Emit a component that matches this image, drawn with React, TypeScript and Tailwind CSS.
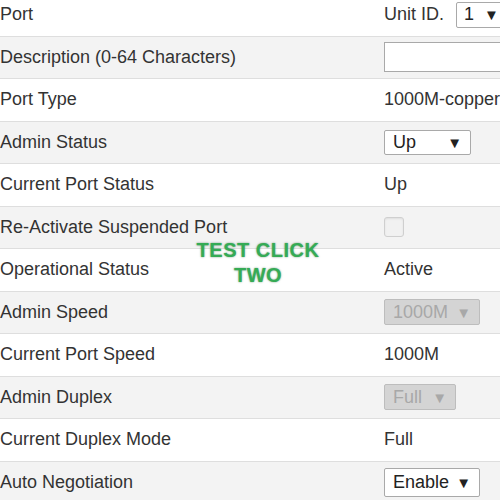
import React from "react"

type Row = {
    label: string
    value: React.ReactNode
}

function Select({ text, width, disabled, height = "h-[26px]" }: { text: string; width: string; disabled?: boolean; height?: string }) {
    return (
        <div
            className={
                "flex items-center justify-between pl-[8px] pr-[8px] border rounded-[2px] " +
                width + " " + height + " " +
                (disabled
                    ? "bg-[#d4d4d4] border-[#bdbdbd] text-[#a8a8a8]"
                    : "bg-white border-[#a9a9a9] text-[#222]")
            }
        >
            <span>{text}</span>
            <span className="text-[15px] leading-none">▼</span>
        </div>
    )
}

export default function App() {
    const rows: Row[] = [
        {
            label: "Port",
            value: (
                <div className="flex items-center gap-[12px]">
                    <span>Unit ID.</span>
                    <div className="flex items-center gap-[10px] h-[26px] w-[70px] pl-[7px] bg-white border border-[#a9a9a9] rounded-[2px] text-[#222]">
                        <span>1</span>
                        <span className="text-[15px] leading-none">▼</span>
                    </div>
                </div>
            ),
        },
        {
            label: "Description (0-64 Characters)",
            value: <div className="w-[160px] h-[30px] bg-white border border-[#a9a9a9]" />,
        },
        { label: "Port Type", value: <span>1000M-copper</span> },
        { label: "Admin Status", value: <Select text="Up" width="w-[87px]" height="h-[25px]" /> },
        { label: "Current Port Status", value: <span>Up</span> },
        {
            label: "Re-Activate Suspended Port",
            value: <div className="size-[20px] rounded-[3px] border border-[#cfcfcf] bg-[#f1f1f1] shadow-[inset_0_1px_2px_rgba(0,0,0,0.08)]" />,
        },
        { label: "Operational Status", value: <span>Active</span> },
        { label: "Admin Speed", value: <Select text="1000M" width="w-[96px]" disabled /> },
        { label: "Current Port Speed", value: <span>1000M</span> },
        { label: "Admin Duplex", value: <Select text="Full" width="w-[72px]" disabled /> },
        { label: "Current Duplex Mode", value: <span>Full</span> },
        { label: "Auto Negotiation", value: <Select text="Enable" width="w-[96px]" height="h-[29px]" /> },
    ]

    return (
        <div className="relative w-[500px] h-[500px] overflow-hidden bg-white font-['Liberation_Sans',Arial,sans-serif] text-[18px] text-[#333]">
            <div className="w-[620px] -mt-[7px]">
                {rows.map((row, i) => (
                    <div
                        key={row.label}
                        className={
                            "grid grid-cols-[384px_1fr] items-center h-[42.5px] border-t border-[#dedede] " +
                            (i % 2 === 1 ? "bg-[#f3f3f3]" : "bg-white")
                        }
                    >
                        <div className="whitespace-nowrap">{row.label}</div>
                        <div className="flex items-center whitespace-nowrap">{row.value}</div>
                    </div>
                ))}
            </div>

            {/* overlay label */}
            <div className="absolute left-[158px] top-[238px] w-[200px] text-center font-bold text-[20px] leading-[25px] tracking-[0.5px] text-[#35ab55] [text-shadow:0_0_2px_rgba(20,90,40,0.6)]">
                TEST CLICK
                <br />
                TWO
            </div>
        </div>
    )
}
